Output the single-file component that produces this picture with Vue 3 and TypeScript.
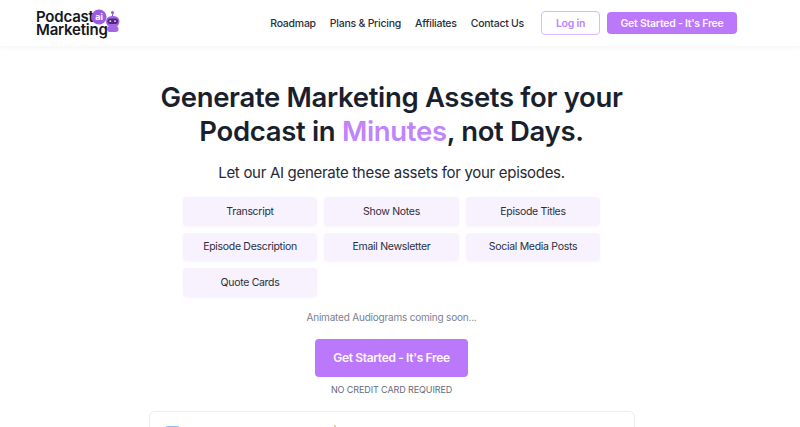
<script setup lang="ts">
const navLinks = ['Roadmap', 'Plans & Pricing', 'Affiliates', 'Contact Us']
const assets = [
  'Transcript',
  'Show Notes',
  'Episode Titles',
  'Episode Description',
  'Email Newsletter',
  'Social Media Posts',
  'Quote Cards',
]
</script>

<template>
  <div class="page">
    <header class="nav">
      <a class="logo">
        <span class="logo-text">
          <span class="logo-line">Podcast</span>
          <span class="logo-line">Marketing</span>
        </span>
        <svg class="logo-mark" width="30" height="26" viewBox="0 0 30 26">
          <circle cx="8" cy="8" r="7.6" fill="#9d5ce0" />
          <text x="8" y="11" text-anchor="middle" class="logo-ai">ai</text>
          <circle cx="21.5" cy="3.5" r="1.5" fill="#9a58dc" />
          <rect x="20.9" y="3.5" width="1.2" height="4" fill="#9a58dc" />
          <rect x="15" y="7" width="13.5" height="11" rx="5.5" fill="#a565e6" />
          <rect x="16.5" y="9.5" width="10.5" height="5.5" rx="2.7" fill="#4b2a78" />
          <circle cx="19.3" cy="12.2" r="0.9" fill="#e8d8fb" />
          <circle cx="24" cy="12.2" r="0.9" fill="#e8d8fb" />
          <rect x="16" y="17" width="11.5" height="6" rx="3" fill="#a565e6" />
        </svg>
      </a>
      <nav class="links">
        <a v-for="link in navLinks" :key="link">{{ link }}</a>
      </nav>
      <a class="btn-login">Log in</a>
      <a class="btn-start">Get Started - It's Free</a>
    </header>

    <main class="hero">
      <h1>Generate Marketing Assets for your<br />Podcast in <span class="accent">Minutes</span>, not Days.</h1>
      <p class="lead">Let our AI generate these assets for your episodes.</p>
      <div class="assets">
        <div v-for="asset in assets" :key="asset" class="asset">{{ asset }}</div>
      </div>
      <p class="soon">Animated Audiograms coming soon...</p>
      <a class="cta">Get Started - It's Free</a>
      <p class="no-card">NO CREDIT CARD REQUIRED</p>
      <div class="card">
        <span class="card-icon"></span>
        <span class="card-dot"></span>
      </div>
    </main>
  </div>
</template>

<style>
html,
body {
  margin: 0;
  background: #fff;
  overflow: hidden;
}
</style>

<style scoped>
.page {
  height: 427px;
  overflow: hidden;
  font-family: Inter, 'Noto Sans', sans-serif;
  color: #1f2433;
}

.nav {
  height: 46px;
  display: flex;
  align-items: center;
  padding: 0 63px 0 36px;
  box-shadow: 0 2px 4px rgba(30, 30, 60, 0.04);
}

.logo {
  display: flex;
  align-items: flex-start;
  margin-right: auto;
}

.logo-text {
  width: 55px;
  font-size: 15px;
  line-height: 13.5px;
  font-weight: 600;
  letter-spacing: -0.2px;
  color: #16161c;
}

.logo-line {
  display: block;
  white-space: nowrap;
}

.logo-mark {
  margin: -1px 0 0 0;
}

.logo-ai {
  font-size: 9px;
  font-weight: 700;
  fill: #fff;
}

.links {
  display: flex;
  gap: 14px;
  margin-right: 17px;
  font-size: 10.5px;
  font-weight: 500;
  letter-spacing: -0.25px;
  color: #2b2f3d;
}

.btn-login,
.btn-start {
  height: 22px;
  display: flex;
  align-items: center;
  justify-content: center;
  border-radius: 4px;
  font-size: 10.5px;
  font-weight: 600;
  letter-spacing: -0.25px;
}

.btn-login {
  width: 57px;
  margin-right: 7px;
  border: 1px solid #d9b8fb;
  color: #c084fc;
}

.btn-start {
  width: 130px;
  background: #bb78fb;
  color: #fbf6ff;
}

.hero {
  width: 783px;
  display: flex;
  flex-direction: column;
  align-items: center;
}

h1 {
  margin: 34px 0 0;
  font-size: 27.5px;
  line-height: 34px;
  font-weight: 600;
  letter-spacing: -0.33px;
  text-align: center;
  color: #1a1f2e;
}

.accent {
  color: #c084fc;
}

.lead {
  margin: 14px 0 0;
  font-size: 15px;
  line-height: 22px;
  letter-spacing: -0.3px;
  color: #252a38;
}

.assets {
  display: grid;
  grid-template-columns: repeat(3, 134.5px);
  grid-auto-rows: 28.5px;
  gap: 7px;
  margin-top: 13px;
}

.asset {
  display: flex;
  align-items: center;
  justify-content: center;
  border-radius: 4px;
  background: #f7f2fe;
  box-shadow: 0 1px 3px rgba(150, 110, 220, 0.08);
  font-size: 10.5px;
  letter-spacing: -0.3px;
  color: #2b2f3d;
}

.soon {
  margin: 12px 0 0;
  font-size: 10px;
  line-height: 16px;
  letter-spacing: -0.2px;
  color: #7b8190;
}

.cta {
  width: 153px;
  height: 38px;
  margin-top: 14px;
  display: flex;
  align-items: center;
  justify-content: center;
  border-radius: 4px;
  background: #bb78fb;
  color: #fbf6ff;
  font-size: 12px;
  font-weight: 600;
  letter-spacing: -0.35px;
}

.no-card {
  margin: 6px 0 0;
  font-size: 9px;
  line-height: 13px;
  letter-spacing: -0.1px;
  color: #666c7a;
}

.card {
  width: 486px;
  height: 60px;
  margin-top: 15px;
  display: flex;
  gap: 154px;
  padding: 14px 15px 0;
  box-sizing: border-box;
  border: 1px solid #eeeef2;
  border-radius: 6px;
}

.card-icon {
  width: 15px;
  height: 16px;
  border-radius: 3px;
  background: #8abcf6;
}

.card-dot {
  width: 2px;
  height: 2px;
  margin-top: -1px;
  background: #e3d68f;
}
</style>
